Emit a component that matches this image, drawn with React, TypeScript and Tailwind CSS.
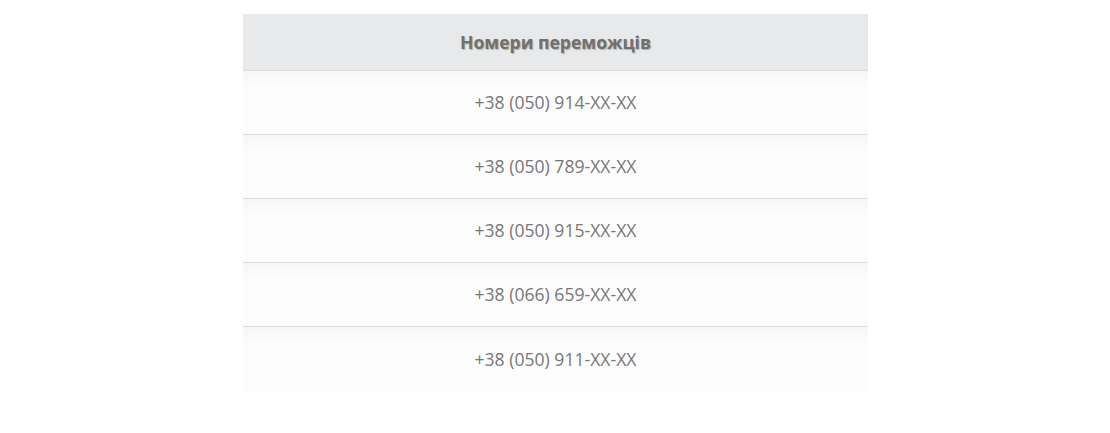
export default function App() {
  const nums = [
    "+38 (050) 914-XX-XX",
    "+38 (050) 789-XX-XX",
    "+38 (050) 915-XX-XX",
    "+38 (066) 659-XX-XX",
    "+38 (050) 911-XX-XX",
  ];
  return (
    <div className="w-[1110px] h-[433px] bg-white pt-[14px]" style={{ fontFamily: '"Open Sans", sans-serif' }}>
      <div className="ml-[243px] w-[625px]">
        <div className="h-[57px] bg-[#e8e9ea] border-b border-[#dcdcdc] flex items-center justify-center">
          <span className="text-[17.6px] font-bold text-[#707070] [text-shadow:1px_1px_1px_rgba(0,0,0,0.25)]">Номери переможців</span>
        </div>
        {nums.map((n, i) => (
          <div
            key={i}
            className={`h-[64px] flex items-center justify-center bg-linear-to-b from-[#f6f6f6] via-[#fdfdfd] via-30% to-[#fdfdfd] ${i < nums.length - 1 ? "border-b border-[#dcdcdc]" : ""}`}
          >
            <span className="text-[17.6px] text-[#777777]">{n}</span>
          </div>
        ))}
      </div>
    </div>
  );
}
